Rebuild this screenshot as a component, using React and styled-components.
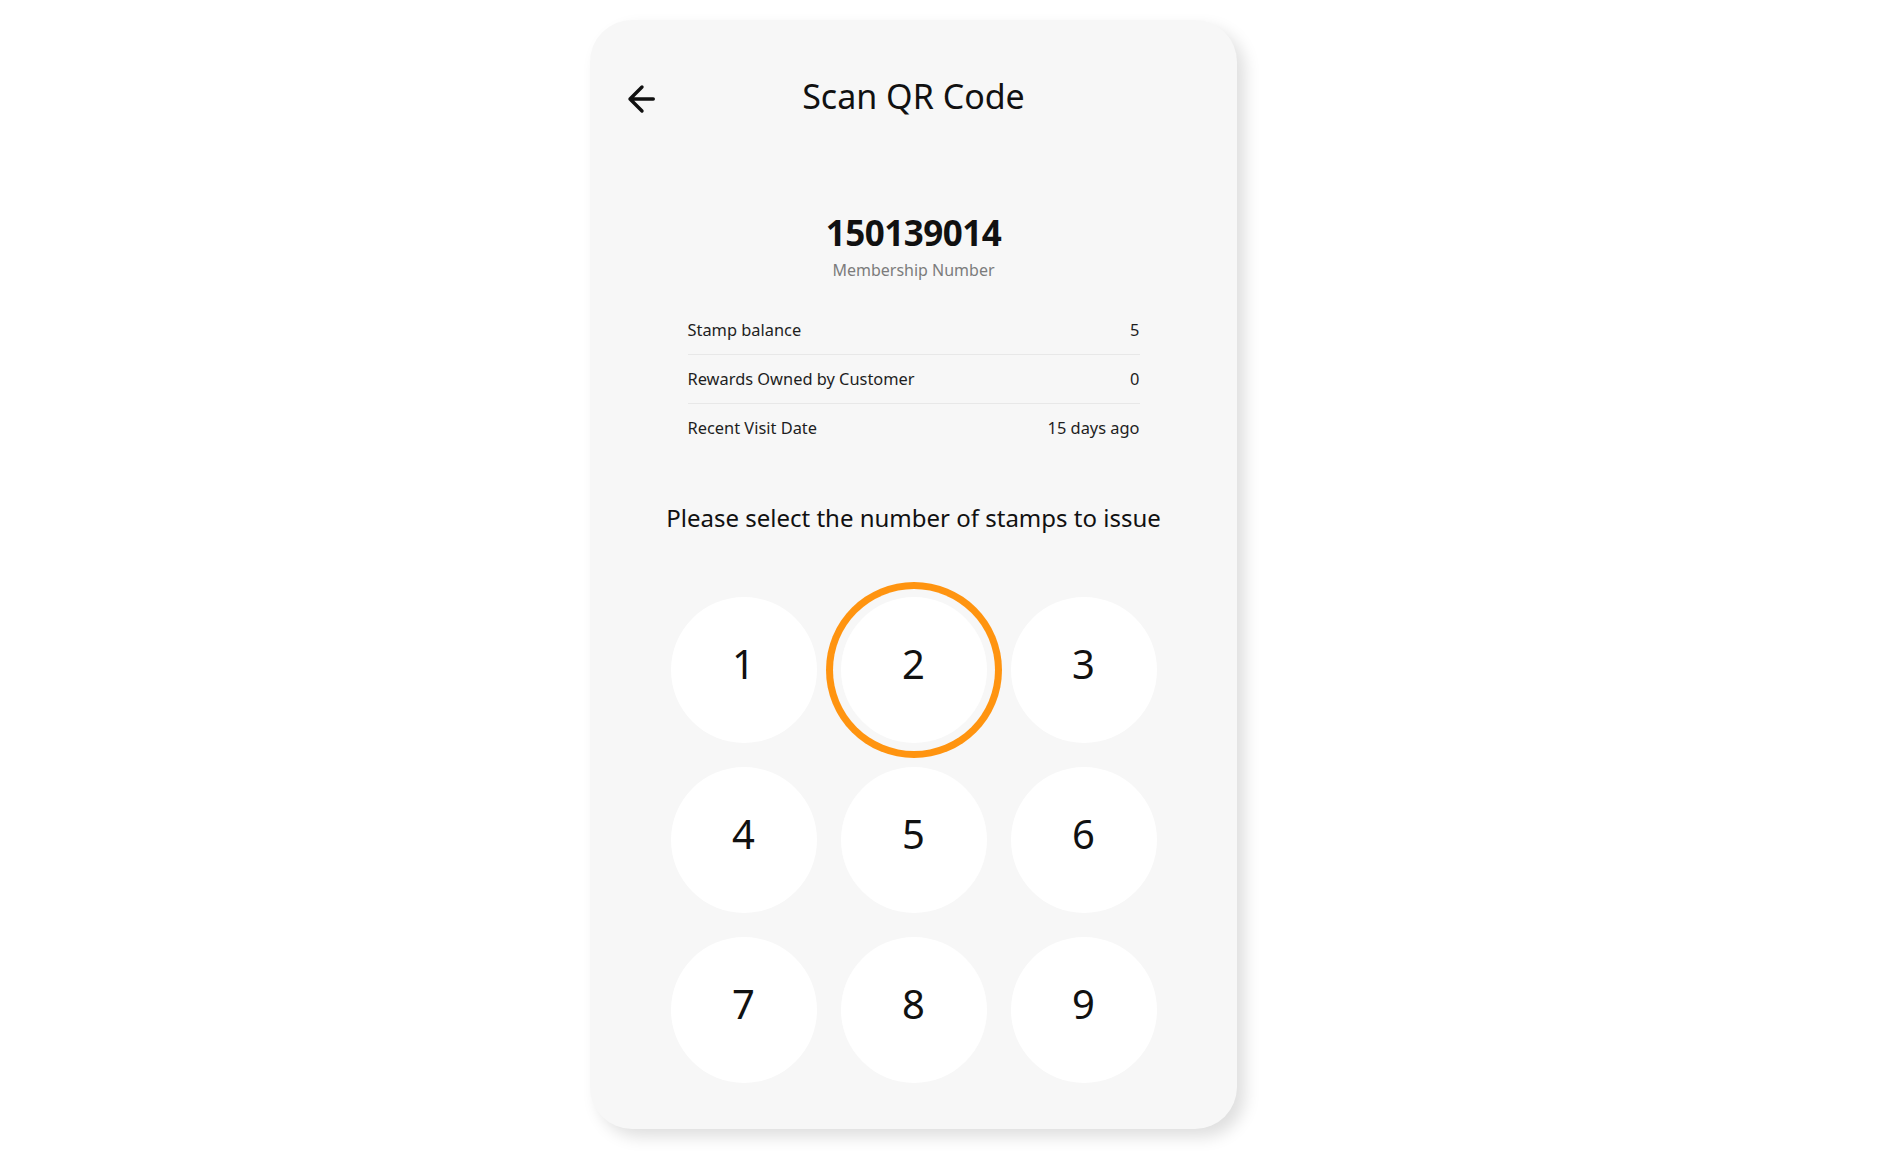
import React, { useState } from 'react'
import styled, { createGlobalStyle } from 'styled-components'

const GlobalStyle = createGlobalStyle`
  html, body {
    margin: 0;
    padding: 0;
    background: #fff;
  }
  body {
    font-family: "Noto Sans", "Noto Sans CJK KR", sans-serif;
    color: #111;
  }
`

const Page = styled.div`
  min-height: 1152px;
  box-sizing: border-box;
  padding: 20px 0 0 590px;
`

const Card = styled.section`
  width: 647px;
  box-sizing: border-box;
  padding: 53px 38px 46px;
  background: #f7f7f7;
  border-radius: 42px;
  box-shadow: 8px 8px 16px rgba(0, 0, 0, 0.13);
`

const Header = styled.header`
  display: grid;
  grid-template-columns: 1fr auto 1fr;
  align-items: start;
  height: 46px;
`

const BackButton = styled.button`
  justify-self: start;
  display: flex;
  padding: 0;
  margin: 11px 0 0 -2px;
  border: none;
  background: transparent;
  cursor: pointer;
  color: #111;
`

const Title = styled.h1`
  margin: 0;
  font-size: 34px;
  line-height: 46px;
  font-weight: 400;
  color: #111;
`

const Member = styled.div`
  margin-top: 92px;
  text-align: center;
`

const MemberNo = styled.div`
  font-size: 35px;
  line-height: 44px;
  font-weight: 700;
  letter-spacing: -0.5px;
  color: #111;
`

const MemberLabel = styled.div`
  margin-top: 4px;
  font-size: 16px;
  line-height: 22px;
  color: #7c7c7c;
`

const InfoList = styled.dl`
  width: 452px;
  margin: 25px auto 0;
  padding: 0;
`

const InfoRow = styled.div`
  display: flex;
  justify-content: space-between;
  padding: 13px 0;
  font-size: 16.4px;
  line-height: 22px;
  color: #1e1e1e;
  border-bottom: 1px solid #e8e8e8;
  &:last-child {
    border-bottom: none;
  }
  dt, dd {
    margin: 0;
  }
`

const Prompt = styled.p`
  margin: 50px 0 0;
  text-align: center;
  font-size: 24px;
  line-height: 32px;
  font-weight: 400;
  color: #111;
`

const Keypad = styled.div`
  display: grid;
  grid-template-columns: repeat(3, 146px);
  gap: 24px;
  justify-content: center;
  margin-top: 63px;
`

const Key = styled.button`
  width: 146px;
  height: 146px;
  padding: 0 0 12px;
  border: none;
  border-radius: 50%;
  background: #fff;
  font-family: inherit;
  font-size: 40px;
  line-height: 1;
  color: #111;
  cursor: pointer;
  display: flex;
  align-items: center;
  justify-content: center;
  box-shadow: ${p => p.$active ? '0 0 0 8px #f7f7f7, 0 0 0 15px #ff9410' : 'none'};
`

const rows = [
  ['Stamp balance', '5'],
  ['Rewards Owned by Customer', '0'],
  ['Recent Visit Date', '15 days ago'],
]

const App = () => {
  const [count, setCount] = useState(2)

  return (
    <>
      <GlobalStyle />
      <Page>
        <Card>
          <Header>
            <BackButton aria-label="Back">
              <svg width="30" height="30" viewBox="0 0 30 30" fill="none">
                <path d="M27.3 15H4M16 3L4 15L16 27" stroke="currentColor" strokeWidth="3.4" strokeLinecap="round" strokeLinejoin="round" />
              </svg>
            </BackButton>
            <Title>Scan QR Code</Title>
          </Header>

          <Member>
            <MemberNo>150139014</MemberNo>
            <MemberLabel>Membership Number</MemberLabel>
          </Member>

          <InfoList>
            {rows.map(([label, value]) => (
              <InfoRow key={label}>
                <dt>{label}</dt>
                <dd>{value}</dd>
              </InfoRow>
            ))}
          </InfoList>

          <Prompt>Please select the number of stamps to issue</Prompt>

          <Keypad>
            {[1, 2, 3, 4, 5, 6, 7, 8, 9].map(n => (
              <Key key={n} $active={n === count} onClick={() => setCount(n)}>
                {n}
              </Key>
            ))}
          </Keypad>
        </Card>
      </Page>
    </>
  )
}

export default App
